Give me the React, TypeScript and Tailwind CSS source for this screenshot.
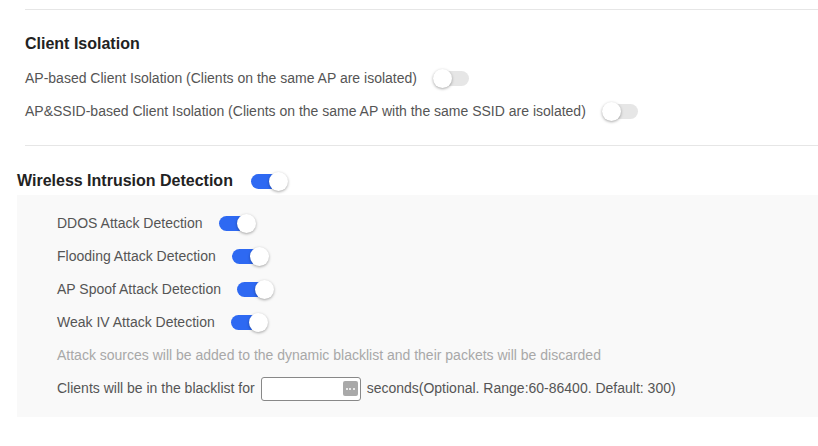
import type { ReactNode } from 'react'

interface ToggleProps {
  on?: boolean
}

function Toggle({ on = false }: ToggleProps) {
  return (
    <span
      className={`relative inline-block h-[15px] w-[36px] shrink-0 rounded-full ${
        on ? 'bg-[#2e69f2]' : 'bg-[#e6e6e6]'
      }`}
    >
      <span
        className={`absolute top-[-2px] h-[19px] w-[19px] rounded-full bg-white shadow-[0_1px_3px_rgba(0,0,0,0.35)] ${
          on ? 'right-[-1px]' : 'left-0'
        }`}
      />
    </span>
  )
}

function Row({ children }: { children: ReactNode }) {
  return <div className="flex h-[33px] items-center gap-4 text-[14px] text-[#555]">{children}</div>
}

const detections = [
  'DDOS Attack Detection',
  'Flooding Attack Detection',
  'AP Spoof Attack Detection',
  'Weak IV Attack Detection',
]

export default function App() {
  return (
    <div className="h-[446px] w-[818px] overflow-hidden bg-white pt-[9px] font-['Liberation_Sans',Arial,sans-serif]">
      <div className="ml-[25px] border-t border-[#e6e6e6]" />

      {/* Client isolation */}
      <section className="pl-[25px]">
        <h2 className="mt-[24px] h-[20px] text-[16px] leading-[20px] font-bold text-[#222]">Client Isolation</h2>
        <div className="mt-[8px]">
          <Row>
            <span>AP-based Client Isolation (Clients on the same AP are isolated)</span>
            <Toggle />
          </Row>
          <Row>
            <span>AP&amp;SSID-based Client Isolation (Clients on the same AP with the same SSID are isolated)</span>
            <Toggle />
          </Row>
        </div>
        <div className="mt-[17px] border-t border-[#e6e6e6]" />
      </section>

      {/* Wireless intrusion detection */}
      <section className="pl-[17px]">
        <div className="mt-[25px] flex h-[20px] items-center gap-[18px]">
          <h2 className="text-[16px] leading-[20px] font-bold text-[#222]">Wireless Intrusion Detection</h2>
          <Toggle on />
        </div>
        <div className="mt-[4px] h-[222px] bg-[#f9f9f9] pt-[12px] pl-[40px]">
          {detections.map((label) => (
            <Row key={label}>
              <span>{label}</span>
              <Toggle on />
            </Row>
          ))}
          <div className="flex h-[33px] items-center text-[14px] text-[#a8a8a8]">
            Attack sources will be added to the dynamic blacklist and their packets will be discarded
          </div>
          <div className="flex h-[33px] items-center text-[14px] text-[#555]">
            <span>Clients will be in the blacklist for</span>
            <div className="ml-[6px] flex h-[24px] w-[100px] items-center justify-end rounded-[3px] border border-[#888] bg-white pr-[2px]">
              <span className="flex h-[15px] w-[15px] items-center justify-center gap-[1.5px] rounded-[2px] bg-[#a9a9a9]">
                <i className="h-[2px] w-[2px] rounded-full bg-white" />
                <i className="h-[2px] w-[2px] rounded-full bg-white" />
                <i className="h-[2px] w-[2px] rounded-full bg-white" />
              </span>
            </div>
            <span className="ml-[6px]">seconds(Optional. Range:60-86400. Default: 300)</span>
          </div>
        </div>
      </section>
    </div>
  )
}
